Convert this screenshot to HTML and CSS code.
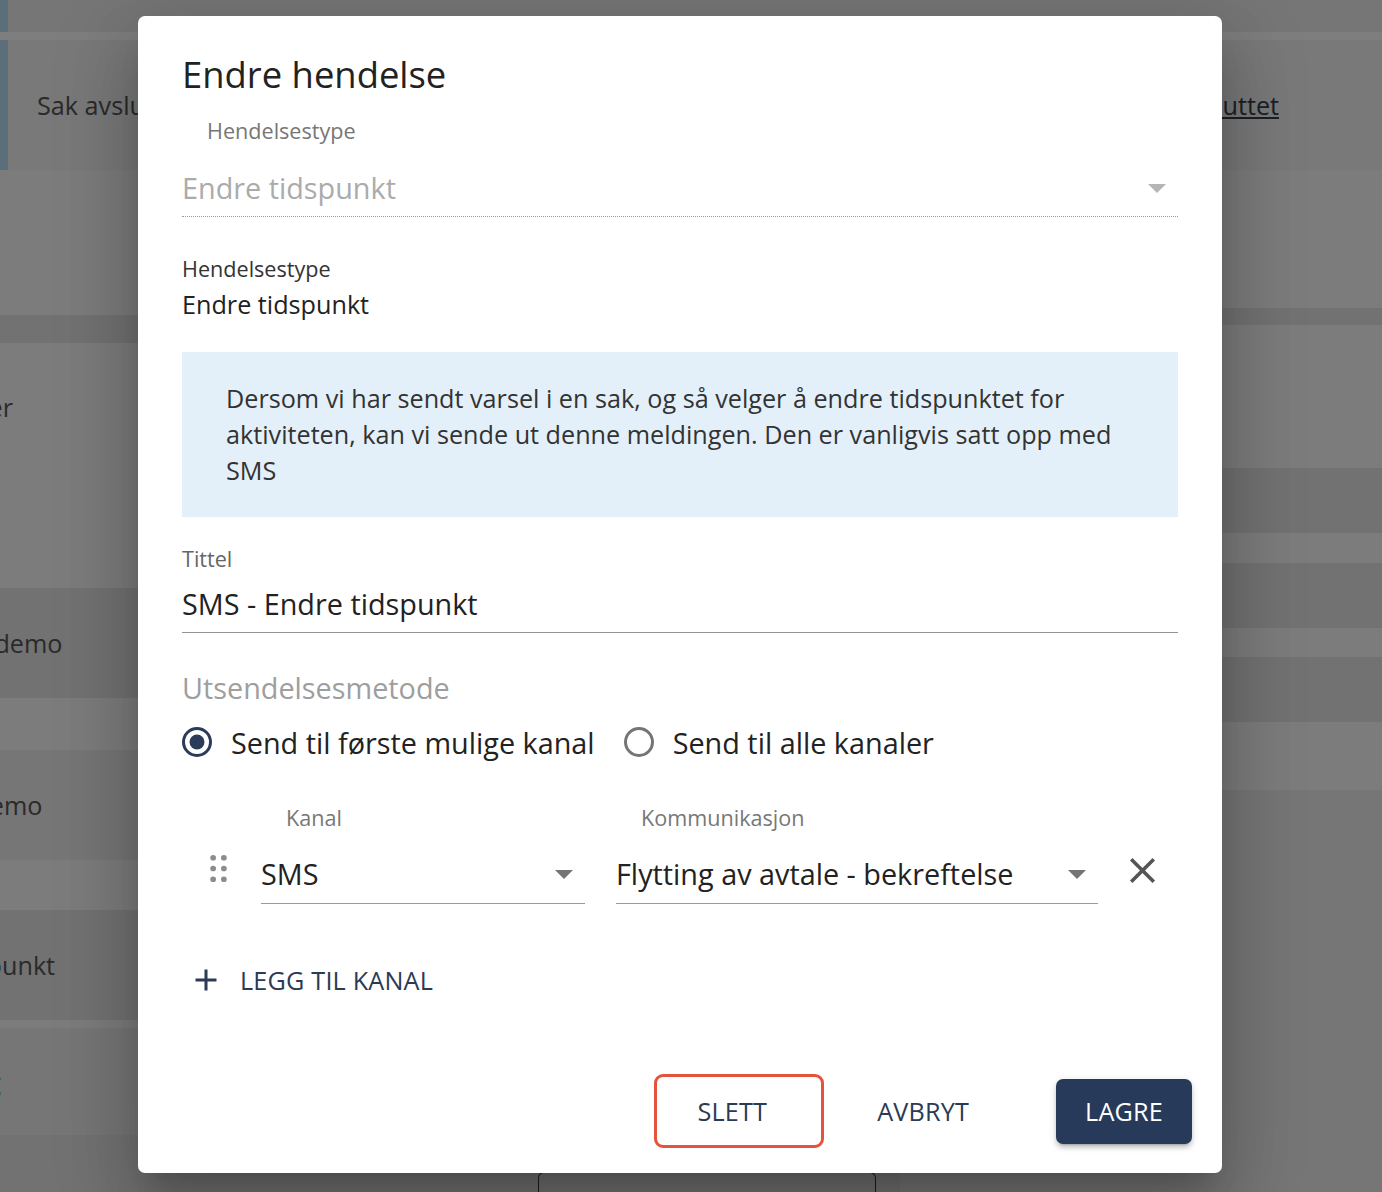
FILE: index.html
```html
<!DOCTYPE html>
<html lang="no">
<head>
  <meta charset="UTF-8">
  <title>Endre hendelse</title>
  <link rel="stylesheet" href="styles.css">
</head>
<body>
  <!-- Siden bak dialogen -->
  <div class="page">
    <div class="row row-top"><span class="accent"></span></div>
    <div class="strip"></div>
    <div class="row row-case">
      <span class="accent"></span>
      <span class="case-title">Sak avsluttet</span>
      <a class="case-link" href="#">Sak avsluttet</a>
    </div>
    <div class="row-gap"></div>

    <div class="lower">
      <div class="col">
        <div class="band sp-15"></div>
        <div class="band dark sp-28"></div>
        <div class="band entry-tall"><span class="name">Send varsler</span></div>
        <div class="band dark entry"><span class="name">Leveranse demo</span></div>
        <div class="band sp-52"></div>
        <div class="band mid entry"><span class="name">Levering demo</span></div>
        <div class="band sp-50"></div>
        <div class="band dark entry"><span class="name">Endre tidspunkt</span></div>
        <div class="band sp-8"></div>
        <div class="band mid entry entry-short"><span class="name link">Ny melding</span></div>
        <div class="band dark rest"><span class="pager"></span></div>
      </div>
      <div class="col">
        <div class="band sp-8"></div>
        <div class="band dark sp-17"></div>
        <div class="band sp-143"></div>
        <div class="band dark sp-65"></div>
        <div class="band sp-30"></div>
        <div class="band dark sp-65"></div>
        <div class="band sp-29"></div>
        <div class="band dark sp-65"></div>
        <div class="band sp-68"></div>
        <div class="band mid rest"></div>
      </div>
    </div>
  </div>

  <div class="backdrop"></div>

  <div class="dialog">
    <h2 class="dialog-title">Endre hendelse</h2>

    <div class="field event-type">
      <div class="field-label">Hendelsestype</div>
      <div class="select disabled">
        <span>Endre tidspunkt</span>
        <svg class="arrow" viewBox="0 0 10 5"><path d="M0 0l5 5 5-5z"/></svg>
      </div>
    </div>

    <div class="readonly">
      <div class="readonly-label">Hendelsestype</div>
      <div class="readonly-value">Endre tidspunkt</div>
    </div>

    <div class="info">
      Dersom vi har sendt varsel i en sak, og så velger å endre tidspunktet for
      aktiviteten, kan vi sende ut denne meldingen. Den er vanligvis satt opp med
      SMS
    </div>

    <div class="field title-field">
      <div class="field-label plain">Tittel</div>
      <div class="input">SMS - Endre tidspunkt</div>
    </div>

    <div class="method-label">Utsendelsesmetode</div>
    <div class="radios">
      <label class="radio checked">
        <svg viewBox="0 0 24 24"><circle cx="12" cy="12" r="9" fill="none" stroke-width="2"/><circle class="dot" cx="12" cy="12" r="5"/></svg>
        Send til første mulige kanal
      </label>
      <label class="radio">
        <svg viewBox="0 0 24 24"><circle cx="12" cy="12" r="9" fill="none" stroke-width="2"/></svg>
        Send til alle kanaler
      </label>
    </div>

    <div class="channel">
      <span class="drag">
        <svg viewBox="0 0 24 24">
          <circle cx="9" cy="6" r="1.6"/><circle cx="15" cy="6" r="1.6"/>
          <circle cx="9" cy="12" r="1.6"/><circle cx="15" cy="12" r="1.6"/>
          <circle cx="9" cy="18" r="1.6"/><circle cx="15" cy="18" r="1.6"/>
        </svg>
      </span>
      <div class="channel-field kanal">
        <div class="field-label">Kanal</div>
        <div class="select">
          <span>SMS</span>
          <svg class="arrow" viewBox="0 0 10 5"><path d="M0 0l5 5 5-5z"/></svg>
        </div>
      </div>
      <div class="channel-field komm">
        <div class="field-label">Kommunikasjon</div>
        <div class="select">
          <span>Flytting av avtale - bekreftelse</span>
          <svg class="arrow" viewBox="0 0 10 5"><path d="M0 0l5 5 5-5z"/></svg>
        </div>
      </div>
      <button class="remove" type="button">
        <svg viewBox="0 0 24 24"><path d="M19 6.41L17.59 5 12 10.59 6.41 5 5 6.41 10.59 12 5 17.59 6.41 19 12 13.41 17.59 19 19 17.59 13.41 12z"/></svg>
      </button>
    </div>

    <button class="add" type="button">
      <svg viewBox="0 0 24 24"><path d="M19 13h-6v6h-2v-6H5v-2h6V5h2v6h6v2z"/></svg>
      <span>Legg til kanal</span>
    </button>

    <div class="actions">
      <button class="btn btn-delete" type="button">Slett</button>
      <button class="btn btn-cancel" type="button">Avbryt</button>
      <button class="btn btn-save" type="button">Lagre</button>
    </div>
  </div>
</body>
</html>
```

FILE: styles.css
```css
* {
  box-sizing: border-box;
}
body {
  margin: 0;
  width: 1382px;
  height: 1192px;
  overflow: hidden;
  position: relative;
  font-family: "Open Sans", "Liberation Sans", sans-serif;
  color: #212121;
}

/* Siden bak */
.page {
  height: 1192px;
  display: flex;
  flex-direction: column;
  font-size: 25.2px;
  color: #555555;
  background-color: #f6f6f6;
}
.row {
  display: flex;
  align-items: center;
}
.row-top {
  height: 32px;
  background-color: #ececec;
  align-items: stretch;
}
.strip {
  height: 8px;
  background-color: #fdfdfd;
}
.row-case {
  height: 130px;
  background-color: #f2f2f2;
  align-items: stretch;
}
.accent {
  width: 8px;
  background-color: #b8dcf2;
}
.case-title {
  margin-left: 29px;
  align-self: center;
}
.case-link {
  margin-left: auto;
  margin-right: 103px;
  align-self: center;
  color: #36404c;
  text-decoration: underline;
}
.row-gap {
  height: 130px;
  background-color: #f8f8f8;
}
.lower {
  flex: 1;
  display: grid;
  grid-template-columns: 900px 1fr;
}
.col {
  display: flex;
  flex-direction: column;
}
.band {
  background-color: #f8f8f8;
  display: flex;
  align-items: center;
  overflow: hidden;
  white-space: nowrap;
}
.band.dark {
  background-color: #e4e4e4;
}
.band.mid {
  background-color: #ececec;
}
.sp-8 { height: 8px; }
.sp-15 { height: 15px; }
.sp-17 { height: 17px; }
.sp-28 { height: 28px; }
.sp-29 { height: 29px; }
.sp-30 { height: 30px; }
.sp-50 { height: 50px; }
.sp-52 { height: 52px; }
.sp-65 { height: 65px; }
.sp-68 { height: 68px; }
.sp-143 { height: 143px; }
.entry {
  height: 110px;
}
.entry-short {
  height: 107px;
}
.entry-tall {
  height: 245px;
  align-items: flex-start;
  padding-top: 47px;
}
.rest {
  flex: 1;
  align-items: flex-end;
}
.name {
  margin-left: -132px;
}
.name.link {
  color: #1f6fc0;
}
.pager {
  margin-left: 538px;
  width: 338px;
  height: 20px;
  border: 1px solid #3a3a3a;
  border-bottom: 0;
  border-radius: 6px 6px 0 0;
}
.backdrop {
  position: absolute;
  inset: 0;
  background-color: rgba(0, 0, 0, 0.5);
}

/* Dialog */
.dialog {
  position: absolute;
  left: 138px;
  top: 16px;
  width: 1084px;
  height: 1157px;
  background-color: #ffffff;
  border-radius: 7px;
  padding: 36px 44px 25px;
  display: flex;
  flex-direction: column;
  box-shadow: 0 20px 27px -13px rgba(0, 0, 0, 0.2),
              0 43px 68px 5px rgba(0, 0, 0, 0.14),
              0 16px 83px 14px rgba(0, 0, 0, 0.12);
}
.dialog-title {
  margin: 0;
  font-size: 36.4px;
  line-height: 44px;
  font-weight: 400;
  color: #222222;
}
.field-label {
  font-size: 21.6px;
  line-height: 26px;
  color: #777777;
  padding-left: 25px;
}
.field-label.plain {
  padding-left: 0;
  color: #666666;
}
.select {
  display: flex;
  align-items: center;
  justify-content: space-between;
  font-size: 28.8px;
  line-height: 36px;
  color: #222222;
  padding-bottom: 10px;
  border-bottom: 1px solid #9a9a9a;
}
.select.disabled {
  color: #ababab;
  border-bottom: 1px dotted #9a9a9a;
}
.arrow {
  width: 18px;
  height: 9px;
  margin-right: 12px;
  fill: #757575;
}
.select.disabled .arrow {
  fill: #b5b5b5;
}
.event-type {
  margin-top: 22px;
}
.event-type .select {
  margin-top: 26px;
}

.readonly {
  margin-top: 39px;
}
.readonly-label {
  font-size: 21.6px;
  line-height: 26px;
  color: #333333;
}
.readonly-value {
  margin-top: 6px;
  font-size: 25.2px;
  line-height: 32px;
  color: #222222;
}

.info {
  margin-top: 32px;
  padding: 28px 44px 29px;
  background-color: #e3f0fa;
  font-size: 25.2px;
  line-height: 36px;
  color: #333333;
}

.title-field {
  margin-top: 29px;
}
.input {
  margin-top: 14px;
  font-size: 28.8px;
  line-height: 36px;
  color: #222222;
  padding-bottom: 10px;
  border-bottom: 1px solid #949494;
}

.method-label {
  margin-top: 37px;
  font-size: 28.8px;
  line-height: 36px;
  color: #9e9e9e;
}
.radios {
  display: flex;
  align-items: center;
  height: 44px;
  margin-top: 14px;
}
.radio {
  display: flex;
  align-items: center;
  font-size: 28.8px;
  color: #222222;
}
.radio svg {
  width: 36px;
  height: 36px;
  margin-left: -3px;
  margin-right: 16px;
  stroke: #757575;
}
.radio.checked svg {
  stroke: #2b3c5a;
}
.radio .dot {
  fill: #2b3c5a;
  stroke: none;
}
.radio + .radio {
  margin-left: 29px;
}

.channel {
  display: flex;
  align-items: flex-end;
  margin-top: 41px;
}
.drag {
  width: 79px;
  padding-left: 15px;
  margin-bottom: 14px;
}
.drag svg {
  width: 43px;
  height: 43px;
  display: block;
  fill: #8c8c8c;
}
.channel-field .select {
  margin-top: 25px;
  padding-bottom: 11px;
}
.kanal {
  width: 324px;
}
.komm {
  width: 482px;
  margin-left: 31px;
}
.remove {
  margin-left: 23px;
  margin-bottom: 12px;
  padding: 0;
  border: none;
  background: none;
}
.remove svg {
  width: 43px;
  height: 43px;
  display: block;
  fill: #555555;
}

.add {
  display: flex;
  align-items: center;
  align-self: flex-start;
  height: 44px;
  margin-top: 54px;
  padding: 0 0 0 6px;
  border: none;
  background: none;
  font-family: inherit;
  font-size: 25.2px;
  font-weight: 500;
  letter-spacing: 0.2px;
  text-transform: uppercase;
  color: #2b3a55;
}
.add svg {
  width: 36px;
  height: 36px;
  margin-right: 16px;
  fill: #2b3a55;
}

.actions {
  margin-top: auto;
  margin-right: -14px;
  display: flex;
  justify-content: flex-end;
  align-items: center;
}
.btn {
  height: 65px;
  padding: 0 29px;
  border: none;
  border-radius: 7px;
  background: none;
  font-family: inherit;
  font-size: 25.2px;
  font-weight: 500;
  letter-spacing: 0.2px;
  text-transform: uppercase;
  color: #2b3a55;
}
.btn-delete {
  height: 74px;
  padding: 0 54px 0 40px;
  border: 3px solid #e5533d;
  border-radius: 9px;
}
.btn-cancel {
  margin-left: 24px;
}
.btn-save {
  margin-left: 58px;
  background-color: #283a59;
  color: #ffffff;
  box-shadow: 0 5px 2px -4px rgba(0, 0, 0, 0.2),
              0 4px 4px 0 rgba(0, 0, 0, 0.14),
              0 2px 9px 0 rgba(0, 0, 0, 0.12);
}
```
